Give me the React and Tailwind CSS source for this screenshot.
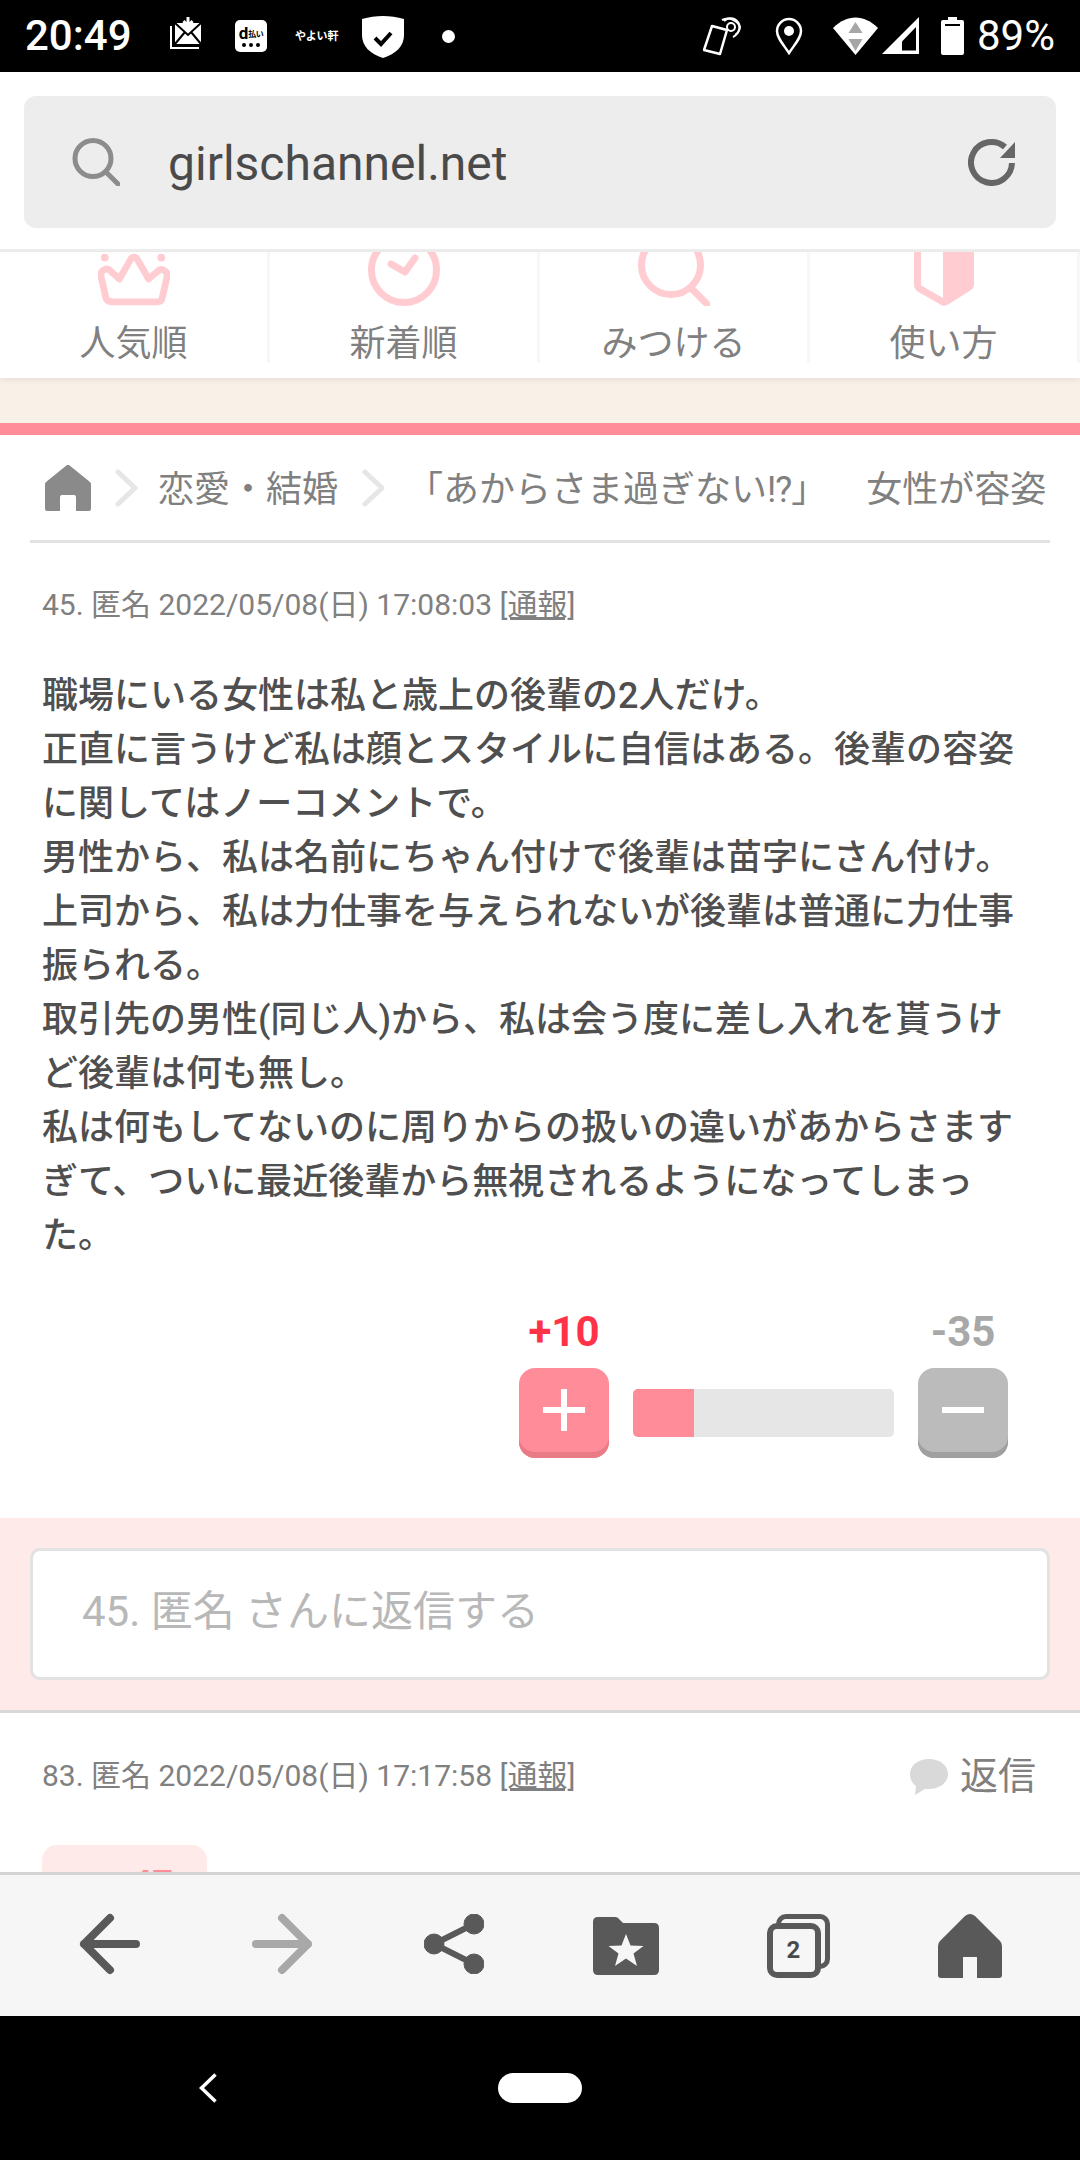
import React from 'react';

const StatusBar = () => (
    <div className="h-[72px] bg-black text-white flex items-center pl-[25px] pr-[25px] shrink-0 relative">
        <span className="text-[42px] font-medium leading-none w-[145px]">20:49</span>
        {/* mail */}
        <svg width="32" height="32" viewBox="0 0 32 32" className="mb-[6px] fill-none stroke-white" strokeWidth="2">
            <path d="M1 9v22h28" strokeWidth="2" />
            <path d="M5 6h26v21H5z" fill="#fff" stroke="none" />
            <path d="M5 6l13 12L31 6M5 27l10-12M31 27L21 15" stroke="#000" strokeWidth="2" />
            <path d="M18 0v8M13.500 4l4.500 5 4.500-5" stroke="#fff" strokeWidth="3" />
        </svg>
        <div className="ml-[33px] w-[32px] h-[32px] bg-white rounded-[5px] text-black flex flex-col items-center justify-center">
            <div className="flex items-end leading-none h-[14px]">
                <span className="text-[17px] font-bold leading-[14px]">d</span>
                <span className="text-[8px] font-bold leading-[11px] whitespace-nowrap tracking-[-0.5px]">払い</span>
            </div>
            <div className="flex gap-[3px] mt-[3px]">
                <div className="w-[4px] h-[4px] rounded-full bg-black"></div>
                <div className="w-[4px] h-[4px] rounded-full bg-black"></div>
                <div className="w-[4px] h-[4px] rounded-full bg-black"></div>
            </div>
        </div>
        <span className="ml-[28px] w-[44px] text-[11px] font-bold leading-none whitespace-nowrap tracking-[-0.2px]">やよい軒</span>
        <svg width="42" height="42" viewBox="0 0 42 42" className="ml-[23px] mt-[2px]">
            <path d="M21 0c7 0 14 1 21 3v16c0 11-8 19-21 23C8 38 0 30 0 19V3c7-2 14-3 21-3z" fill="#fff" />
            <path d="M13 22l6 6 10-11" fill="none" stroke="#000" strokeWidth="4" />
        </svg>
        <div className="ml-[38px] w-[13px] h-[13px] rounded-full bg-white"></div>
        <div className="flex-1"></div>
        <svg width="40" height="40" viewBox="0 0 40 40" className="mr-[32px]" fill="none" stroke="#fff" strokeWidth="2">
            <path d="M9 10l15 4-7 24-16-4z" strokeWidth="2.500" strokeLinejoin="round" />
            <path d="M21 5a9 9 0 1 1 11 14" />
            <path d="M19 4a13 13 0 0 1 18 7 13 13 0 0 1-7 10" />
            <circle cx="28" cy="11" r="4" />
        </svg>
        <svg width="28" height="38" viewBox="0 0 28 38" className="mr-[30px]" fill="none" stroke="#fff" strokeWidth="2.500">
            <path d="M14 36C8 27 2 21 2 14a12 12 0 0 1 24 0c0 7-6 13-12 22z" />
            <circle cx="14" cy="14" r="5" fill="#fff" stroke="none" />
        </svg>
        <svg width="45" height="38" viewBox="0 0 45 38" className="mr-[4px]">
            <path d="M0 11C14-3 31-3 45 11L22.500 38z" fill="#fff" />
            <path d="M22.500 5l7 11h-14z" fill="#a6a6a6" />
            <path d="M22.500 34l7-12h-14z" fill="#a6a6a6" />
        </svg>
        <svg width="38" height="38" viewBox="0 0 38 38" className="mr-[21px]">
            <path d="M37 0v37H0z" fill="#fff" />
            <path d="M20 24.500L34 10v23.500H20z" fill="#000" />
        </svg>
        <svg width="23" height="38" viewBox="0 0 23 38" className="mr-[13px]">
            <path d="M7 0h9v3h5q2 0 2 2v31q0 2-2 2H2q-2 0-2-2V5q0-2 2-2h5z" fill="#fff" />
            <path d="M4 7h15v2H4z" fill="#000" />
        </svg>
        <span className="text-[42px] font-normal leading-none">89%</span>
    </div>
);

const UrlBar = () => (
    <div className="h-[180px] bg-white px-[24px] pt-[24px] border-b-[3px] border-[#eeeeee] shrink-0">
        <div className="h-[132px] bg-[#ededed] rounded-[12px] flex items-center pl-[48px] pr-[40px]">
            <svg width="48" height="48" viewBox="0 0 48 48" fill="none" stroke="#8c8c8c" strokeWidth="5" strokeLinecap="round">
                <circle cx="21" cy="20.500" r="18" />
                <path d="M34 34l12 12" />
            </svg>
            <span className="ml-[48px] mt-[4px] text-[48px] text-[#4a4a4a] leading-none flex-1">girlschannel.net</span>
            <svg width="48" height="48" viewBox="0 0 48 48" fill="none">
                <path d="M37 9A20.500 20.500 0 1 0 44 25" stroke="#666666" strokeWidth="6" />
                <path d="M47 4v16H32z" fill="#666666" />
            </svg>
        </div>
    </div>
);

const TabItem = ({ label, children }) => (
    <div className="flex flex-col items-center h-[111px] border-r-[3px] border-[#f7f7f7]">
        <div className="h-[54px] flex justify-center">{children}</div>
        <span className="mt-[20px] text-[36px] leading-[36px] text-[#808080] whitespace-nowrap">{label}</span>
    </div>
);

const Tabs = () => (
    <div className="h-[126px] bg-white grid grid-cols-4 shrink-0 relative shadow-[0_2px_6px_rgba(0,0,0,0.08)]">
        <TabItem label="人気順">
            <svg width="72" height="54" viewBox="0 0 74 54" fill="none" stroke="#ffccd2" strokeWidth="7" strokeLinejoin="round" strokeLinecap="round">
                <path d="M13 50.500h48q4 0 5-4l5-22c1-6-6-9-9-6L52 27 40 6q-3-3-6 0L22 27 12 18c-3-3-10 0-9 6l5 22q1 4 5 4z" />
                <circle cx="7" cy="5" r="4" fill="#ffccd2" stroke="none" />
                <circle cx="65" cy="5" r="4" fill="#ffccd2" stroke="none" />
            </svg>
        </TabItem>
        <TabItem label="新着順">
            <svg width="72" height="54" viewBox="0 0 72 54" fill="none" stroke="#ffccd2" strokeWidth="7" strokeLinecap="round" strokeLinejoin="round">
                <circle cx="36" cy="18" r="32.500" />
                <path d="M23 12l14 8 10-14" />
            </svg>
        </TabItem>
        <TabItem label="みつける">
            <svg width="72" height="54" viewBox="0 0 72 54" fill="none" stroke="#ffccd2" strokeWidth="7" strokeLinecap="round">
                <circle cx="33" cy="13" r="29.500" />
                <path d="M54 37l15 15" />
            </svg>
        </TabItem>
        <TabItem label="使い方">
            <svg width="60" height="54" viewBox="0 0 60 54" fill="none">
                <path d="M3.500 0v33q0 2 2 3.500L29 50" stroke="#ffccd2" strokeWidth="7" strokeLinecap="round" />
                <path d="M29 0h31v32q0 4-3 6L35 52q-5 3-9 0l3-2z" fill="#ffccd2" />
            </svg>
        </TabItem>
    </div>
);

const Crumb = () => (
    <svg width="24" height="38" viewBox="0 0 24 38" fill="none" stroke="#e6e6e6" strokeWidth="5" strokeLinecap="round" strokeLinejoin="round" className="shrink-0">
        <path d="M3 3l17 16L3 35" />
    </svg>
);

const Breadcrumb = () => (
    <div className="mx-[30px] h-[108px] border-b-[3px] border-[#e2e2e2] pr-[3px] pt-[1px]">
        <div className="h-full flex items-center overflow-hidden pl-[15px]">
            <svg width="46" height="46" viewBox="0 0 46 46" className="shrink-0 mb-[1px]">
                <path d="M22 0q1-.5 2 0l21 17q1 1 1 2v25q0 2-2 2H31V32q0-2-2-2H17q-2 0-2 2v14H2q-2 0-2-2V19q0-1 1-2z" fill="#8a8a8a" />
            </svg>
            <div className="ml-[24px]"><Crumb /></div>
            <span className="ml-[19px] mt-[4px] text-[36px] text-[#808080] leading-none whitespace-nowrap">恋愛・結婚</span>
            <div className="ml-[24px]"><Crumb /></div>
            <span className="ml-[21px] mt-[4px] text-[36px] text-[#808080] leading-none whitespace-nowrap">「あからさま過ぎない<span className="tracking-[-1px]">!?</span>」</span>
            <span className="ml-[39px] mt-[4px] text-[36px] text-[#808080] leading-none whitespace-nowrap">女性が容姿で判断される</span>
        </div>
    </div>
);

const Meta = ({ children }) => (
    <div className="text-[30px] leading-[36px] text-[#808080] whitespace-nowrap">
        {children} <span className="underline">[通報]</span>
    </div>
);

const Vote = () => (
    <div className="flex justify-end pr-[72px] mt-[48px]">
        <div className="flex flex-col items-center w-[90px]">
            <span className="text-[42px] font-bold text-[#ff3347] leading-[42px]">+10</span>
            <div className="mt-[15px] w-[90px] h-[90px] rounded-[16px] bg-[#ff8c99] shadow-[inset_0_-6px_0_#e97b87] flex items-center justify-center pb-[6px]">
                <svg width="42" height="42" viewBox="0 0 42 42"><path d="M18 0h6v18h18v6H24v18h-6V24H0v-6h18z" fill="#fff" /></svg>
            </div>
        </div>
        <div className="mt-[78px] ml-[24px] mr-[24px] w-[261px] h-[48px] bg-[#e6e6e6] rounded-[5px] overflow-hidden">
            <div className="w-[61px] h-full bg-[#ff8c99]"></div>
        </div>
        <div className="flex flex-col items-center w-[90px]">
            <span className="text-[42px] font-bold text-[#a8a8a8] leading-[42px]">-35</span>
            <div className="mt-[15px] w-[90px] h-[90px] rounded-[16px] bg-[#bbbbbb] shadow-[inset_0_-6px_0_#a0a0a0] flex items-center justify-center pb-[6px]">
                <div className="w-[42px] h-[6px] bg-white"></div>
            </div>
        </div>
    </div>
);

const Content = () => (
    <div className="flex-1 bg-white overflow-hidden">
        <Breadcrumb />
        <div className="px-[42px] pt-[44px]">
            <Meta>45. 匿名 2022/05/08(日) 17:08:03</Meta>
            <p className="mt-[46px] text-[36px] leading-[54px] font-medium text-[#4f4f4f]">
                職場にいる女性は私と歳上の後輩の2人だけ。<br />
                正直に言うけど私は顔とスタイルに自信はある。後輩の容姿に関してはノーコメントで。<br />
                男性から、私は名前にちゃん付けで後輩は苗字にさん付け。<br />
                上司から、私は力仕事を与えられないが後輩は普通に力仕事振られる。<br />
                取引先の男性(同じ人)から、私は会う度に差し入れを貰うけど後輩は何も無し。<br />
                私は何もしてないのに周りからの扱いの違いがあからさますぎて、ついに最近後輩から無視されるようになってしまった。
            </p>
        </div>
        <Vote />
        <div className="mt-[60px] h-[195px] bg-[#ffeaea] border-b-[3px] border-[#d8d8d8] px-[30px] pt-[30px]">
            <div className="h-[132px] bg-white border-[3px] border-[#e2e2e2] rounded-[10px] flex items-center pl-[49px] pb-[5px] text-[42px] text-[#b8b8b8]">
                45. 匿名 さんに返信する
            </div>
        </div>
        <div className="pl-[42px] pr-[44px] pt-[44px] flex items-center justify-between">
            <Meta>83. 匿名 2022/05/08(日) 17:17:58</Meta>
            <div className="flex items-center">
                <svg width="40" height="36" viewBox="0 0 40 36" className="mt-[2px]">
                    <path d="M20 0c11 0 19 6.500 19 15 0 9-9 15-19 15-2 0-3.500 0-5 .5L6 36l1-9C3 24 1 20 1 15 1 6.500 9 0 20 0z" fill="#d9d9d9" />
                </svg>
                <span className="ml-[11px] text-[38px] leading-none text-[#808080]">返信</span>
            </div>
        </div>
        <div className="ml-[42px] mt-[50px] w-[165px] h-[60px] bg-[#ffeaea] rounded-[15px] pl-[70px] pt-[20px] text-[36px] font-bold text-[#ff8c99] leading-[38px]">+47</div>
    </div>
);

const BottomNav = () => (
    <div className="h-[144px] bg-[#f6f6f6] border-t-[3px] border-[#d4d4d4] px-[24px] grid grid-cols-6 shrink-0 relative">
        <div className="flex items-center justify-center pb-[3px]">
            <svg width="62" height="62" viewBox="0 0 62 62" fill="none" stroke="#595959" strokeWidth="8" strokeLinecap="round" strokeLinejoin="round">
                <path d="M31 5L5 31l26 26M5 31h52" />
            </svg>
        </div>
        <div className="flex items-center justify-center pb-[3px]">
            <svg width="62" height="62" viewBox="0 0 62 62" fill="none" stroke="#a8a8a8" strokeWidth="8" strokeLinecap="round" strokeLinejoin="round">
                <path d="M31 5l26 26-26 26M5 31h52" />
            </svg>
        </div>
        <div className="flex items-center justify-center pb-[3px]">
            <svg width="60" height="60" viewBox="0 0 60 60" fill="#595959" stroke="#595959">
                <circle cx="50" cy="10" r="10" /><circle cx="10" cy="30" r="10" /><circle cx="50" cy="50" r="10" />
                <path d="M50 10L10 30l40 20" fill="none" strokeWidth="6" />
            </svg>
        </div>
        <div className="flex items-center justify-center">
            <svg width="66" height="58" viewBox="0 0 66 58" fill="#595959">
                <path d="M5 0h17q3 0 4 2l4 4h31q5 0 5 5v42q0 5-5 5H5q-5 0-5-5V5q0-5 5-5z" />
                <path d="M33 17l4.500 11.500 13 .500-10 7.500 3.500 12.500L33 41.500 22 49l3.500-12.500-10-7.500 13-.500z" fill="#f6f6f6" />
            </svg>
        </div>
        <div className="flex items-center justify-center">
            <div className="relative w-[63px] h-[64px]">
                <div className="absolute right-0 top-0 w-[54px] h-[55px] border-[5px] border-[#595959] rounded-[10px]"></div>
                <div className="absolute left-0 bottom-0 w-[54px] h-[55px] bg-[#f6f6f6] border-[6px] border-[#595959] rounded-[10px] flex items-center justify-center text-[24px] font-bold leading-none text-[#4a4a4a]">2</div>
            </div>
        </div>
        <div className="flex items-center justify-center">
            <svg width="64" height="64" viewBox="0 0 64 64" fill="#595959">
                <path d="M27 2q5-4 10 0l25 25q2 2 2 5v29q0 3-3 3H39V43H25v21H3q-3 0-3-3V32q0-3 2-5z" />
            </svg>
        </div>
    </div>
);

const NavBar = () => (
    <div className="h-[144px] bg-black shrink-0 flex items-start pt-[57px] pl-[199px]">
        <svg width="18" height="30" viewBox="0 0 18 30" fill="none" stroke="#fff" strokeWidth="3.500">
            <path d="M16.500 1.500L2.500 15l14 13.500" />
        </svg>
        <div className="ml-[281px] w-[84px] h-[30px] rounded-full bg-white"></div>
    </div>
);

const App = () => {
    return (
        <div className="w-[1080px] h-[2160px] flex flex-col overflow-hidden bg-white font-[family-name:Roboto,'Noto_Sans_CJK_JP',sans-serif]">
            <StatusBar />
            <UrlBar />
            <Tabs />
            <div className="h-[45px] bg-[#f9f1e8] shrink-0"></div>
            <div className="h-[12px] bg-[#ff8c99] shrink-0"></div>
            <Content />
            <BottomNav />
            <NavBar />
        </div>
    );
};
export default App;
